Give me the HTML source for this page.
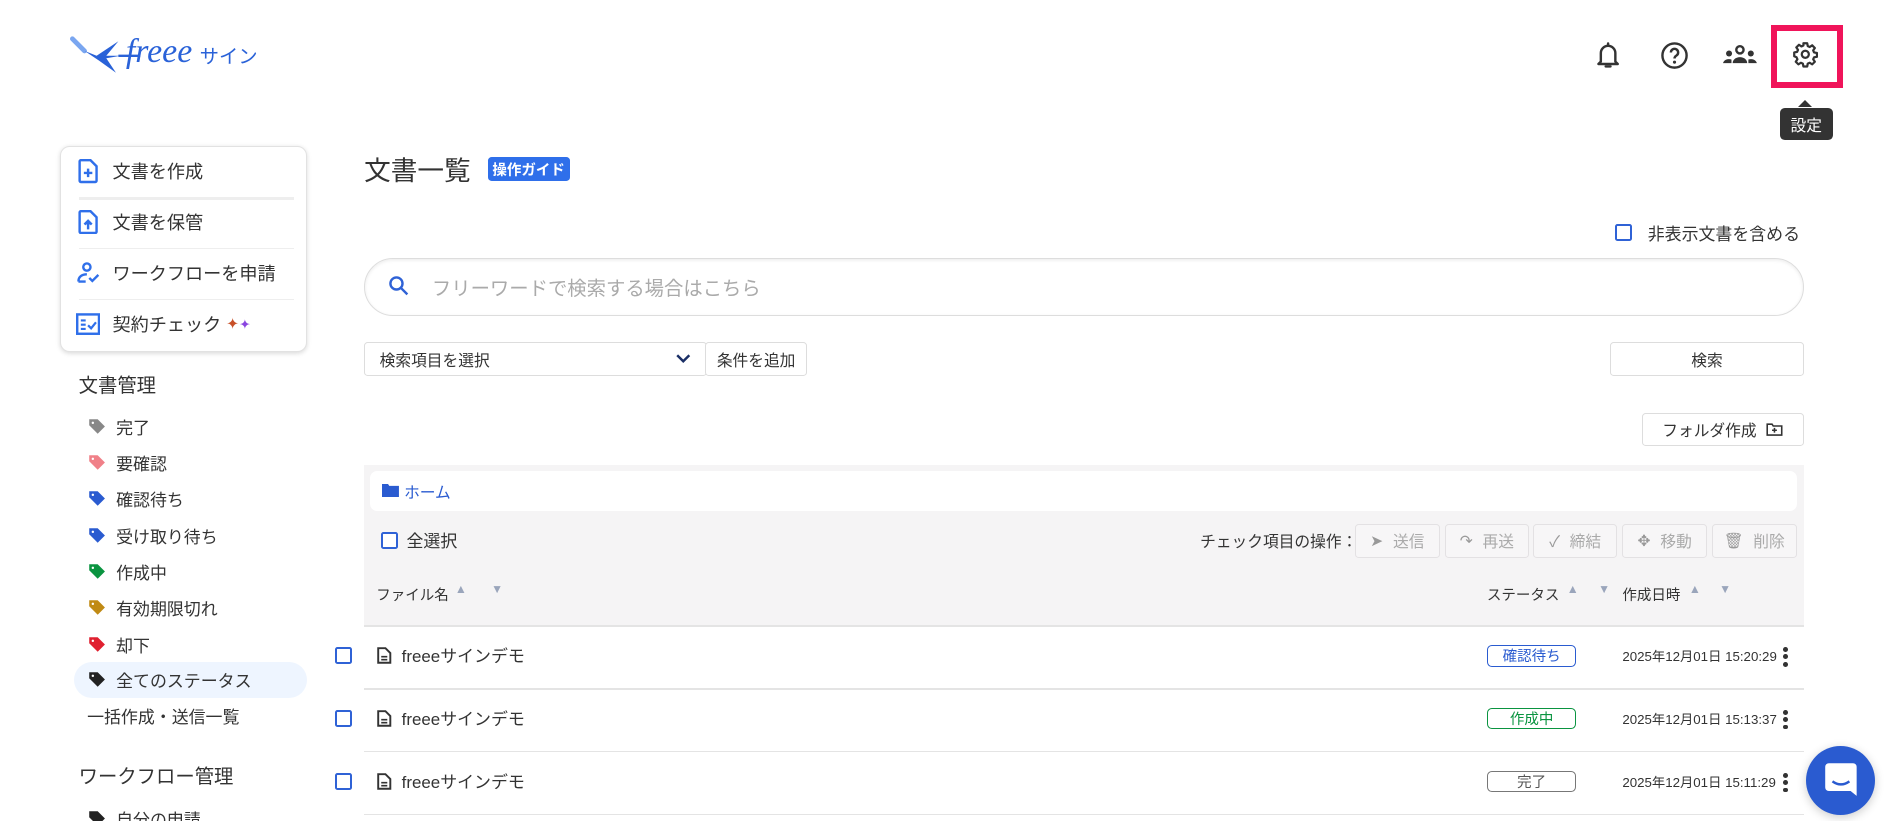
<!DOCTYPE html>
<html lang="ja"><head><meta charset="utf-8">
<style>
*{box-sizing:border-box;margin:0;padding:0}
html,body{width:1897px;height:821px;overflow:hidden;background:#fff}
#w{zoom:1.2098;position:relative;width:1568px;height:679px;font-family:"Liberation Sans","Noto Sans CJK JP",sans-serif;color:#333}
.a{position:absolute;white-space:nowrap}
.cb{position:absolute;width:14px;height:14px;border:2px solid #2f62d6;border-radius:2px;background:#fff}
.btn{position:absolute;border:1px solid #ddd;border-radius:3px;background:#fff;font-size:13px;display:flex;align-items:center;justify-content:center;color:#333}
.ab{position:absolute;top:433px;height:28px;width:70px;border:1px solid #e3e1e3;border-radius:3px;font-size:13px;color:#aaa;display:flex;align-items:center;justify-content:center;gap:8px;background:#f7f6f7}
.row{position:absolute;left:301px;width:1190px;height:1px;background:#e4e4e4}
.badge{position:absolute;left:1229px;width:74px;height:18px;border:1px solid;border-radius:4px;font-size:12px;display:flex;align-items:center;justify-content:center}
.date{position:absolute;left:1341px;font-size:11px;color:#333}
.kb{position:absolute;left:1474px;width:4px}
.kb i{display:block;width:4px;height:4px;border-radius:2px;background:#333;margin-bottom:2px}
.st{position:absolute;left:73px;font-size:14px;display:flex;align-items:center;gap:8px}
.mi{position:absolute;left:63px;display:flex;align-items:center;gap:10px;font-size:15px}
.ar{position:absolute;font-size:10px;color:#9aa5bb}
</style></head><body><div id="w">
<svg class="a" style="left:58px;top:28px" width="60" height="36" viewBox="0 0 60 36"><path d="M2 4 L12 14" stroke="#7aa6f0" stroke-width="4" stroke-linecap="round"/><path d="M12 14 L22 18 L40 6 L30 18 L42 18 L30 20 L38 32 L24 22 Z" fill="#2a62d8"/><path d="M40 18 L58 18" stroke="#2a62d8" stroke-width="2"/></svg>
<div class="a" style="left:104px;top:28px;font-family:'Liberation Serif',serif;font-style:italic;font-size:28px;color:#2a62d8;line-height:30px">freee</div>
<div class="a" style="left:165px;top:34px;font-size:16px;color:#2a62d8">サイン</div>
<svg class="a" style="left:1319px;top:34px" width="20" height="24" viewBox="0 0 20 24"><path d="M4 17V10a6 6 0 0 1 12 0v7l2 2H2z" fill="none" stroke="#333" stroke-width="2" stroke-linejoin="round"/><path d="M10 2v2M8 21h4" stroke="#333" stroke-width="2" stroke-linecap="round"/></svg>
<svg class="a" style="left:1372px;top:34px" width="24" height="24" viewBox="0 0 24 24"><circle cx="12" cy="12" r="10" fill="none" stroke="#333" stroke-width="2"/><path d="M9 9.5a3 3 0 1 1 4.5 2.6c-1 .6-1.5 1.2-1.5 2.4" fill="none" stroke="#333" stroke-width="2"/><circle cx="12" cy="17.5" r="1.3" fill="#333"/></svg>
<svg class="a" style="left:1424px;top:37px" width="28" height="16" viewBox="0 0 28 16"><circle cx="14" cy="4" r="3" fill="none" stroke="#333" stroke-width="2"/><path d="M8 15a6 5 0 0 1 12 0z" fill="#333"/><circle cx="5" cy="7" r="2.5" fill="#333"/><circle cx="23" cy="7" r="2.5" fill="#333"/><path d="M0 15a5 4 0 0 1 7-3v3zM28 15a5 4 0 0 0-7-3v3z" fill="#333"/></svg>
<div class="a" style="left:1464px;top:21px;width:59px;height:52px;border:5px solid #f0145a"></div>
<svg class="a" style="left:1481px;top:34px" width="22" height="22" viewBox="0 0 24 24"><path d="M10.3 2h3.4l.5 2.6 1.8.8 2.2-1.5 2.4 2.4-1.5 2.2.8 1.8 2.6.5v3.4l-2.6.5-.8 1.8 1.5 2.2-2.4 2.4-2.2-1.5-1.8.8-.5 2.6h-3.4l-.5-2.6-1.8-.8-2.2 1.5-2.4-2.4 1.5-2.2-.8-1.8L2 13.7v-3.4l2.6-.5.8-1.8-1.5-2.2 2.4-2.4 2.2 1.5 1.8-.8z" fill="none" stroke="#333" stroke-width="2" stroke-linejoin="round"/><circle cx="12" cy="12" r="3.2" fill="none" stroke="#333" stroke-width="2"/></svg>
<div class="a" style="left:1486px;top:83px;width:0;height:0;border:6px solid transparent;border-bottom-color:#333;border-top:0"></div>
<div class="a" style="left:1471px;top:89px;width:44px;height:27px;background:#333;border-radius:4px;color:#fff;font-size:13px;display:flex;align-items:center;justify-content:center">設定</div>
<div class="a" style="left:50px;top:121px;width:204px;height:170px;border:1px solid #e2e2e2;border-radius:8px;box-shadow:0 1px 4px rgba(0,0,0,.15);background:#fff"></div>
<div class="a" style="left:65px;top:163px;width:178px;height:2px;background:#eee"></div>
<div class="a" style="left:65px;top:205px;width:178px;height:1px;background:#eee"></div>
<div class="a" style="left:65px;top:247px;width:178px;height:1px;background:#eee"></div>
<div class="mi" style="top:131px"><svg width="20" height="20" viewBox="0 0 20 20"><path d="M4 1h8l5 5v12a1 1 0 0 1-1 1H4a1 1 0 0 1-1-1V2a1 1 0 0 1 1-1z" fill="none" stroke="#2f6fea" stroke-width="2"/><path d="M10 8v7M6.5 11.5h7" stroke="#2f6fea" stroke-width="2"/></svg>文書を作成</div>
<div class="mi" style="top:173px"><svg width="20" height="20" viewBox="0 0 20 20"><path d="M4 1h8l5 5v12a1 1 0 0 1-1 1H4a1 1 0 0 1-1-1V2a1 1 0 0 1 1-1z" fill="none" stroke="#2f6fea" stroke-width="2"/><path d="M10 16v-6M7 12l3-3 3 3" fill="#2f6fea" stroke="#2f6fea" stroke-width="2"/></svg>文書を保管</div>
<div class="mi" style="top:215px"><svg width="20" height="20" viewBox="0 0 20 20"><circle cx="9" cy="5" r="3" fill="none" stroke="#2f6fea" stroke-width="2"/><path d="M2 17c0-4 3-6 7-6M2 17h6" fill="none" stroke="#2f6fea" stroke-width="2"/><path d="M11 14l2.5 2.5 5-5" fill="none" stroke="#2f6fea" stroke-width="2"/></svg>ワークフローを申請</div>
<div class="mi" style="top:257px"><svg width="20" height="20" viewBox="0 0 20 20"><rect x="1" y="2" width="18" height="16" fill="none" stroke="#2f6fea" stroke-width="2"/><path d="M4 7h4M4 10.5h4M4 14h4M10 11l2.5 2.5 4-5" fill="none" stroke="#2f6fea" stroke-width="1.8"/></svg>契約チェック<span style="font-size:13px;margin-left:-6px"><span style="color:#c85028">✦</span><span style="color:#8a45e0;font-size:11px">✦</span></span></div>
<div class="a" style="left:65px;top:306px;font-size:16px">文書管理</div>
<div class="a" style="left:61px;top:547px;width:193px;height:30px;background:#eef5ff;border-radius:15px"></div>
<svg width="0" height="0" style="position:absolute"><defs><path id="tg" d="M1 1h7l6 6-6 6-7-7z"/></defs></svg>
<div class="st" style="top:342px"><svg width="15" height="14"><use href="#tg" fill="#888"/><circle cx="4" cy="4" r="1" fill="#fff"/></svg>完了</div>
<div class="st" style="top:372px"><svg width="15" height="14"><use href="#tg" fill="#f08088"/><circle cx="4" cy="4" r="1" fill="#fff"/></svg>要確認</div>
<div class="st" style="top:402px"><svg width="15" height="14"><use href="#tg" fill="#2a5bd0"/><circle cx="4" cy="4" r="1" fill="#fff"/></svg>確認待ち</div>
<div class="st" style="top:432px"><svg width="15" height="14"><use href="#tg" fill="#2a5bd0"/><circle cx="4" cy="4" r="1" fill="#fff"/></svg>受け取り待ち</div>
<div class="st" style="top:462px"><svg width="15" height="14"><use href="#tg" fill="#0a9440"/><circle cx="4" cy="4" r="1" fill="#fff"/></svg>作成中</div>
<div class="st" style="top:492px"><svg width="15" height="14"><use href="#tg" fill="#c08a14"/><circle cx="4" cy="4" r="1" fill="#fff"/></svg>有効期限切れ</div>
<div class="st" style="top:522px"><svg width="15" height="14"><use href="#tg" fill="#e02030"/><circle cx="4" cy="4" r="1" fill="#fff"/></svg>却下</div>
<div class="st" style="top:551px"><svg width="15" height="14"><use href="#tg" fill="#222"/><circle cx="4" cy="4" r="1" fill="#fff"/></svg>全てのステータス</div>
<div class="a" style="left:72px;top:581px;font-size:14px">一括作成・送信一覧</div>
<div class="a" style="left:65px;top:629px;font-size:16px">ワークフロー管理</div>
<div class="st" style="top:666px"><svg width="15" height="14"><use href="#tg" fill="#222"/></svg>自分の申請</div>
<div class="a" style="left:301px;top:123px;font-size:22px">文書一覧</div>
<div class="a" style="left:403px;top:130px;width:68px;height:20px;background:#2f6fea;border-radius:3px;color:#fff;font-size:12px;font-weight:bold;display:flex;align-items:center;justify-content:center">操作ガイド</div>
<div class="cb" style="left:1335px;top:185px"></div>
<div class="a" style="left:1362px;top:182px;font-size:14px">非表示文書を含める</div>
<div class="a" style="left:301px;top:213px;width:1190px;height:48px;border:1px solid #ddd;border-radius:24px;box-shadow:inset 0 1px 3px rgba(0,0,0,.08)"></div>
<svg class="a" style="left:321px;top:227px" width="18" height="18" viewBox="0 0 18 18"><circle cx="7" cy="7" r="5" fill="none" stroke="#2f62d6" stroke-width="2"/><path d="M11 11l5 5" stroke="#2f62d6" stroke-width="2"/></svg>
<div class="a" style="left:357px;top:226px;font-size:16px;color:#aaa">フリーワードで検索する場合はこちら</div>
<div class="btn" style="left:301px;top:283px;width:283px;height:28px;justify-content:space-between;padding:0 12px 0 12px"><span>検索項目を選択</span><svg width="12" height="8"><path d="M1 1l5 5 5-5" fill="none" stroke="#1a2f66" stroke-width="2"/></svg></div>
<div class="btn" style="left:583px;top:283px;width:84px;height:28px">条件を追加</div>
<div class="btn" style="left:1331px;top:283px;width:160px;height:28px">検索</div>
<div class="btn" style="left:1357px;top:341px;width:134px;height:28px;gap:8px">フォルダ作成<svg width="14" height="11"><path d="M1 1h4l1 1.5h7V10H1z" fill="none" stroke="#333" stroke-width="1.3"/><path d="M7 4v4M5 6h4" stroke="#333" stroke-width="1.3"/></svg></div>
<div class="a" style="left:301px;top:384px;width:1190px;height:133px;background:#f5f4f5"></div>
<div class="a" style="left:306px;top:389px;width:1179px;height:33px;background:#fff;border-radius:6px"></div>
<svg class="a" style="left:316px;top:400px" width="14" height="11"><path d="M0 0h5l1 1.5h8V11H0z" fill="#2a5bd0"/></svg>
<div class="a" style="left:334px;top:397px;font-size:13px;color:#2a5bd0">ホーム</div>
<div class="cb" style="left:315px;top:440px"></div>
<div class="a" style="left:336px;top:436px;font-size:14px">全選択</div>
<div class="a" style="left:992px;top:437px;font-size:13px">チェック項目の操作：</div>
<div class="ab" style="left:1120px"><span style="color:#999">➤</span>送信</div>
<div class="ab" style="left:1194px"><span style="color:#999">↷</span>再送</div>
<div class="ab" style="left:1267px"><span style="color:#999">✓</span>締結</div>
<div class="ab" style="left:1341px"><span style="color:#999">✥</span>移動</div>
<div class="ab" style="left:1415px"><span style="color:#999">🗑</span>削除</div>
<div class="a" style="left:311px;top:483px;font-size:12px">ファイル名</div>
<div class="ar" style="left:376px;top:481px">▲</div><div class="ar" style="left:406px;top:481px">▼</div>
<div class="a" style="left:1229px;top:483px;font-size:12px">ステータス</div>
<div class="ar" style="left:1295px;top:481px">▲</div><div class="ar" style="left:1321px;top:481px">▼</div>
<div class="a" style="left:1341px;top:483px;font-size:12px">作成日時</div>
<div class="ar" style="left:1396px;top:481px">▲</div><div class="ar" style="left:1421px;top:481px">▼</div>
<div class="row" style="top:517px"></div><div class="row" style="top:569px"></div><div class="row" style="top:621px"></div><div class="row" style="top:673px"></div>
<div class="cb" style="left:277px;top:535px"></div>
<div class="cb" style="left:277px;top:587px"></div>
<div class="cb" style="left:277px;top:639px"></div>
<svg class="a" style="left:312px;top:535px" width="12" height="14"><path d="M1 1h6l4 4v8H1z" fill="none" stroke="#333" stroke-width="1.6"/><path d="M3.5 8h5M3.5 10.5h5" stroke="#333" stroke-width="1.3"/></svg>
<svg class="a" style="left:312px;top:587px" width="12" height="14"><path d="M1 1h6l4 4v8H1z" fill="none" stroke="#333" stroke-width="1.6"/><path d="M3.5 8h5M3.5 10.5h5" stroke="#333" stroke-width="1.3"/></svg>
<svg class="a" style="left:312px;top:639px" width="12" height="14"><path d="M1 1h6l4 4v8H1z" fill="none" stroke="#333" stroke-width="1.6"/><path d="M3.5 8h5M3.5 10.5h5" stroke="#333" stroke-width="1.3"/></svg>
<div class="a" style="left:332px;top:531px;font-size:14px">freeeサインデモ</div>
<div class="a" style="left:332px;top:583px;font-size:14px">freeeサインデモ</div>
<div class="a" style="left:332px;top:635px;font-size:14px">freeeサインデモ</div>
<div class="badge" style="top:533px;border-color:#2a5bd0;color:#2a5bd0">確認待ち</div>
<div class="badge" style="top:585px;border-color:#0a9440;color:#0a9440">作成中</div>
<div class="badge" style="top:637px;border-color:#777;color:#555">完了</div>
<div class="date" style="top:534px">2025年12月01日 15:20:29</div>
<div class="date" style="top:586px">2025年12月01日 15:13:37</div>
<div class="date" style="top:638px">2025年12月01日 15:11:29</div>
<div class="kb" style="top:535px"><i></i><i></i><i></i></div>
<div class="kb" style="top:587px"><i></i><i></i><i></i></div>
<div class="kb" style="top:639px"><i></i><i></i><i></i></div>
<div class="a" style="left:1493px;top:617px;width:57px;height:57px;border-radius:50%;background:#2a5bd0;box-shadow:0 2px 8px rgba(0,0,0,.2)"></div>
<svg class="a" style="left:1508px;top:630px" width="28" height="30" viewBox="0 0 28 30"><path d="M4 1h20a3 3 0 0 1 3 3v24l-5-4H4a3 3 0 0 1-3-3V4a3 3 0 0 1 3-3z" fill="#fff"/><path d="M7 16q7 5 14 0" fill="none" stroke="#2a5bd0" stroke-width="2"/></svg>
</div></body></html>
